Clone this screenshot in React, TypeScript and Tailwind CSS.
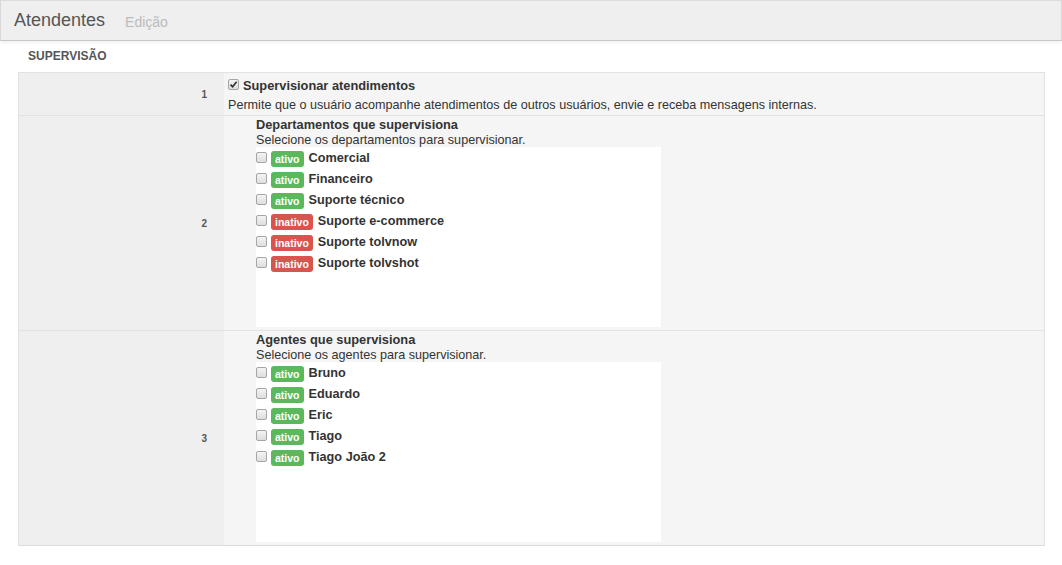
import React from "react";

type Item = { name: string; active: boolean };

const depts: Item[] = [
  { name: "Comercial", active: true },
  { name: "Financeiro", active: true },
  { name: "Suporte técnico", active: true },
  { name: "Suporte e-commerce", active: false },
  { name: "Suporte tolvnow", active: false },
  { name: "Suporte tolvshot", active: false },
];

const agents: Item[] = [
  { name: "Bruno", active: true },
  { name: "Eduardo", active: true },
  { name: "Eric", active: true },
  { name: "Tiago", active: true },
  { name: "Tiago João 2", active: true },
];

function Box({ checked }: { checked?: boolean }) {
  return (
    <span className="inline-flex h-[11px] w-[11px] shrink-0 items-center justify-center rounded-[2px] border border-[#a6a6a6] bg-gradient-to-b from-[#f4f4f4] to-[#dedede]">
      {checked && (
        <svg width="9" height="9" viewBox="0 0 9 9">
          <path d="M1.5 4.6 L3.6 6.8 L7.6 1.8" fill="none" stroke="#333" strokeWidth="1.7" />
        </svg>
      )}
    </span>
  );
}

function List({ items }: { items: Item[] }) {
  return (
    <div className="h-[180px] w-[405px] bg-white pt-[1px]">
      {items.map((it) => (
        <div key={it.name} className="flex h-[21px] items-center">
          <span className="-mt-[3px] mr-[4px] flex">
            <Box />
          </span>
          <span
            className={
              "mr-[5px] rounded-[3px] px-[4px] text-[10.5px] font-bold leading-[16px] text-white " +
              (it.active ? "bg-[#5cb85c]" : "bg-[#d9534f]")
            }
          >
            {it.active ? "ativo" : "inativo"}
          </span>
          <span className="text-[12.7px] font-bold text-[#333]">{it.name}</span>
        </div>
      ))}
    </div>
  );
}

function Num({ n }: { n: number }) {
  return (
    <div className="flex w-[205px] shrink-0 items-center justify-end bg-[#efefef] pr-[17px] text-[10px] font-bold text-[#555]">
      {n}
    </div>
  );
}

export default function App() {
  return (
    <div className="min-h-[565px] bg-white text-[#333]" style={{ fontFamily: '"Liberation Sans", Arial, sans-serif' }}>
      <div className="flex h-[41px] items-center border border-b-[#c8c8c8] border-l-[#d8d8d8] border-r-[#d8d8d8] border-t-[#dcdcdc] bg-[#efefef] pl-[13px] shadow-[0_2px_3px_rgba(0,0,0,0.06)]">
        <span className="text-[18px] text-[#555]">Atendentes</span>
        <span className="ml-[20px] mt-[3px] text-[14px] text-[#bbb]">Edição</span>
      </div>
      <div className="px-[28px] pt-[8px] text-[12px] font-bold leading-[14px] text-[#555]">SUPERVISÃO</div>
      <div className="ml-[18px] mt-[9px] w-[1027px] border border-[#e2e2e2] border-b-[#dcdcdc]">
        <div className="flex h-[42px]">
          <Num n={1} />
          <div className="flex-1 bg-[#f5f5f5] pl-[4px] pt-[4px]">
            <div className="flex h-[17px] items-center">
              <span className="-mt-[2px] mr-[4px] flex">
                <Box checked />
              </span>
              <span className="text-[12.8px] font-bold">Supervisionar atendimentos</span>
            </div>
            <div className="mt-[2px] text-[12.6px] leading-[18px]">
              Permite que o usuário acompanhe atendimentos de outros usuários, envie e receba mensagens internas.
            </div>
          </div>
        </div>
        <div className="flex h-[215px] border-t border-[#e2e2e2]">
          <Num n={2} />
          <div className="flex-1 bg-[#f5f5f5] pl-[32px]">
            <div className="text-[12.8px] font-bold leading-[17px]">Departamentos que supervisiona</div>
            <div className="text-[12.6px] leading-[14px]">Selecione os departamentos para supervisionar.</div>
            <List items={depts} />
          </div>
        </div>
        <div className="flex h-[215px] border-t border-[#e2e2e2]">
          <Num n={3} />
          <div className="flex-1 bg-[#f5f5f5] pl-[32px]">
            <div className="text-[12.8px] font-bold leading-[17px]">Agentes que supervisiona</div>
            <div className="text-[12.6px] leading-[14px]">Selecione os agentes para supervisionar.</div>
            <List items={agents} />
          </div>
        </div>
      </div>
    </div>
  );
}
